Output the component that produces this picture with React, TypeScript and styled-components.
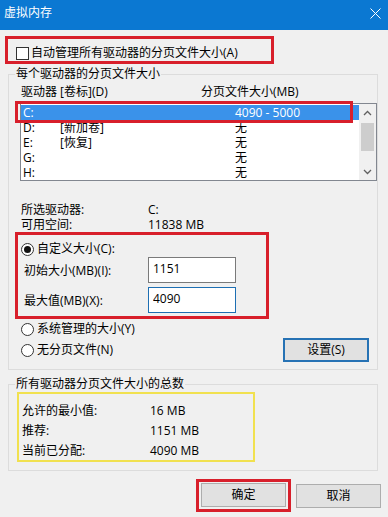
import React from "react";
import styled, { createGlobalStyle } from "styled-components";

const Global = createGlobalStyle`
  html, body { margin: 0; padding: 0; background: #f0f0f0; }
  body {
    font-family: "Open Sans", "Noto Sans CJK SC", "Microsoft YaHei", sans-serif;
    font-size: 12px;
    color: #000;
  }
  * { box-sizing: border-box; }
`;

const RED = "#d81f2b";

const Window = styled.div`
  width: 388px;
  height: 517px;
  background: #f0f0f0;
  overflow: hidden;
  display: flex;
  flex-direction: column;
`;

const TitleBar = styled.div`
  flex: none;
  height: 30px;
  background: #0b78d2;
  color: #fff;
  display: flex;
  justify-content: space-between;
  align-items: flex-start;
  padding: 5px 7px 0 4px;
  line-height: 16px;
`;

const CloseIcon = styled.svg`
  margin-top: 3px;
  width: 11px;
  height: 11px;
`;

const MarkFrame = styled.div<{ $w: number; $h: number }>`
  border: 3px solid ${RED};
  width: ${(p) => p.$w}px;
  height: ${(p) => p.$h}px;
`;

const AutoFrame = styled(MarkFrame)`
  margin: 6px 0 0 5px;
  padding: 6px 0 0 8px;
`;

const CheckRow = styled.label`
  display: flex;
  align-items: center;
  gap: 2px;
  line-height: 16px;
  height: 16px;
`;

const CheckBox = styled.span`
  width: 13px;
  height: 13px;
  border: 1px solid #333;
  background: #fff;
  flex: none;
`;

const GroupBox = styled.fieldset<{ $mt: number }>`
  margin: ${(p) => p.$mt}px 0 0 8px;
  width: 370px;
  padding: 0;
  border: 1px solid #dcdcdc;
  min-width: 0;
`;

const Legend = styled.legend`
  margin-left: 6px;
  padding: 0 1px;
  line-height: 16px;
  font-size: 12px;
`;

const GroupBody = styled.div`
  padding: 2px 0 7px 6px;
  display: flex;
  flex-direction: column;
`;

const ColumnHeader = styled.div`
  margin-left: 6px;
  display: grid;
  grid-template-columns: 180px auto;
  line-height: 16px;
`;

const ListWrap = styled.div`
  position: relative;
  margin: 3px 0 0 5px;
  width: 357px;
  height: 78px;
`;

const ListBox = styled.div`
  width: 100%;
  height: 100%;
  border: 1px solid #828790;
  background: #fff;
  display: flex;
  overflow: hidden;
`;

const Rows = styled.div`
  flex: 1;
  padding-top: 1px;
`;

const Row = styled.div<{ $selected?: boolean }>`
  height: 15px;
  line-height: 15px;
  display: grid;
  grid-template-columns: 37px 175px 1fr;
  padding-left: 2px;
  background: ${(p) => (p.$selected ? "#3a92ea" : "transparent")};
  color: ${(p) => (p.$selected ? "#fff" : "#000")};
`;

const ScrollBar = styled.div`
  width: 17px;
  flex: none;
  background: #f0f0f0;
  display: flex;
  flex-direction: column;
`;

const ScrollArrow = styled.div`
  height: 17px;
  display: flex;
  align-items: center;
  justify-content: center;
`;

const Thumb = styled.div`
  margin: 2px 2px 0;
  height: 28px;
  background: #cdcdcd;
`;

const Track = styled.div`
  flex: 1;
`;

const SelectionMark = styled.div`
  position: absolute;
  left: -5px;
  top: -2px;
  width: 338px;
  height: 22px;
  border: 3px solid ${RED};
  pointer-events: none;
`;

const InfoGrid = styled.div`
  margin: 21px 0 0 6px;
  display: grid;
  grid-template-columns: 127px auto;
  line-height: 15px;
`;

const CustomFrame = styled(MarkFrame)`
  padding: 6px 0 0 3px;
  display: flex;
  flex-direction: column;
`;

const RadioRow = styled.label`
  display: flex;
  align-items: center;
  gap: 3px;
  height: 16px;
  line-height: 16px;
`;

const Radio = styled.span<{ $checked?: boolean }>`
  width: 13px;
  height: 13px;
  border: 1px solid #333;
  border-radius: 50%;
  background: #fff;
  flex: none;
  display: flex;
  align-items: center;
  justify-content: center;
  &::after {
    content: "";
    width: 7px;
    height: 7px;
    border-radius: 50%;
    background: ${(p) => (p.$checked ? "#111" : "transparent")};
  }
`;

const FieldRow = styled.div<{ $mt: number }>`
  margin-top: ${(p) => p.$mt}px;
  padding-left: 3px;
  height: 26px;
  display: grid;
  grid-template-columns: 124px 88px;
  align-items: center;
`;

const TextBox = styled.input<{ $focused?: boolean }>`
  width: 88px;
  height: 26px;
  border: 1px solid ${(p) => (p.$focused ? "#1d6fb3" : "#7a7a7a")};
  background: #fff;
  font: inherit;
  font-size: 12px;
  color: #000;
  padding: 0 0 3px 4px;
  outline: none;
  margin: 0;
`;

const OptionsRow = styled.div`
  margin-top: 2px;
  display: flex;
  justify-content: space-between;
  align-items: flex-start;
  padding: 0 8px 0 6px;
`;

const RadioColumn = styled.div`
  display: flex;
  flex-direction: column;
  gap: 5px;
`;

const Button = styled.button<{ $default?: boolean }>`
  width: ${(p) => (p.$default ? 86 : 85)}px;
  height: 24px;
  margin: 0;
  padding: 0;
  border: ${(p) => (p.$default ? "2px solid #2672b4" : "1px solid #adadad")};
  background: #e1e1e1;
  font: inherit;
  font-size: 12px;
  color: #000;
  line-height: 16px;
`;

const SetButton = styled(Button)`
  margin-top: 17px;
`;

const TotalsBody = styled.div`
  padding: 0 0 8px 8px;
`;

const YellowFrame = styled.div`
  width: 238px;
  height: 70px;
  border: 2px solid #f1e14f;
  padding: 9px 0 0 3px;
  display: grid;
  grid-template-columns: 128px auto;
  row-gap: 4px;
  align-content: start;
  line-height: 16px;
`;

const Footer = styled.div`
  margin-top: 8px;
  display: flex;
  justify-content: flex-end;
  align-items: center;
  gap: 5px;
  padding-right: 7px;
`;

const OkFrame = styled(MarkFrame)`
  padding: 1px 2px 2px;
`;

const Chevron = ({ up }: { up?: boolean }) => (
  <svg width="9" height="6" viewBox="0 0 9 6">
    <path
      d={up ? "M1 5 L4.5 1.5 L8 5" : "M1 1 L4.5 4.5 L8 1"}
      fill="none"
      stroke="#606060"
      strokeWidth="1.3"
    />
  </svg>
);

const drives = [
  { d: "C:", label: "", size: "4090 - 5000" },
  { d: "D:", label: "[新加卷]", size: "无" },
  { d: "E:", label: "[恢复]", size: "无" },
  { d: "G:", label: "", size: "无" },
  { d: "H:", label: "", size: "无" },
];

const totals = [
  ["允许的最小值:", "16 MB"],
  ["推荐:", "1151 MB"],
  ["当前已分配:", "4090 MB"],
];

export default function App() {
  return (
    <>
      <Global />
      <Window>
        <TitleBar>
          <span>虚拟内存</span>
          <CloseIcon viewBox="0 0 11 11">
            <path d="M0.5 0.5 L10.5 10.5 M10.5 0.5 L0.5 10.5" stroke="#fff" strokeWidth="1" />
          </CloseIcon>
        </TitleBar>

        <AutoFrame $w={269} $h={28}>
          <CheckRow>
            <CheckBox />
            <span>自动管理所有驱动器的分页文件大小(A)</span>
          </CheckRow>
        </AutoFrame>

        <GroupBox $mt={2}>
          <Legend>每个驱动器的分页文件大小</Legend>
          <GroupBody>
            <ColumnHeader>
              <span>驱动器 [卷标](D)</span>
              <span>分页文件大小(MB)</span>
            </ColumnHeader>
            <ListWrap>
              <ListBox>
                <Rows>
                  {drives.map((r, i) => (
                    <Row key={r.d} $selected={i === 0}>
                      <span>{r.d}</span>
                      <span>{r.label}</span>
                      <span>{r.size}</span>
                    </Row>
                  ))}
                </Rows>
                <ScrollBar>
                  <ScrollArrow>
                    <Chevron up />
                  </ScrollArrow>
                  <Thumb />
                  <Track />
                  <ScrollArrow>
                    <Chevron />
                  </ScrollArrow>
                </ScrollBar>
              </ListBox>
              <SelectionMark />
            </ListWrap>

            <InfoGrid>
              <span>所选驱动器:</span>
              <span>C:</span>
              <span>可用空间:</span>
              <span>11838 MB</span>
            </InfoGrid>

            <CustomFrame $w={254} $h={87}>
              <RadioRow>
                <Radio $checked />
                <span>自定义大小(C):</span>
              </RadioRow>
              <FieldRow $mt={0}>
                <span>初始大小(MB)(I):</span>
                <TextBox readOnly defaultValue="1151" />
              </FieldRow>
              <FieldRow $mt={4}>
                <span>最大值(MB)(X):</span>
                <TextBox readOnly defaultValue="4090" $focused />
              </FieldRow>
            </CustomFrame>

            <OptionsRow>
              <RadioColumn>
                <RadioRow>
                  <Radio />
                  <span>系统管理的大小(Y)</span>
                </RadioRow>
                <RadioRow>
                  <Radio />
                  <span>无分页文件(N)</span>
                </RadioRow>
              </RadioColumn>
              <SetButton $default>设置(S)</SetButton>
            </OptionsRow>
          </GroupBody>
        </GroupBox>

        <GroupBox $mt={6}>
          <Legend>所有驱动器分页文件大小的总数</Legend>
          <TotalsBody>
            <YellowFrame>
              {totals.map(([k, v]) => (
                <React.Fragment key={k}>
                  <span>{k}</span>
                  <span>{v}</span>
                </React.Fragment>
              ))}
            </YellowFrame>
          </TotalsBody>
        </GroupBox>

        <Footer>
          <OkFrame $w={95} $h={33}>
            <Button>确定</Button>
          </OkFrame>
          <Button>取消</Button>
        </Footer>
      </Window>
    </>
  );
}
